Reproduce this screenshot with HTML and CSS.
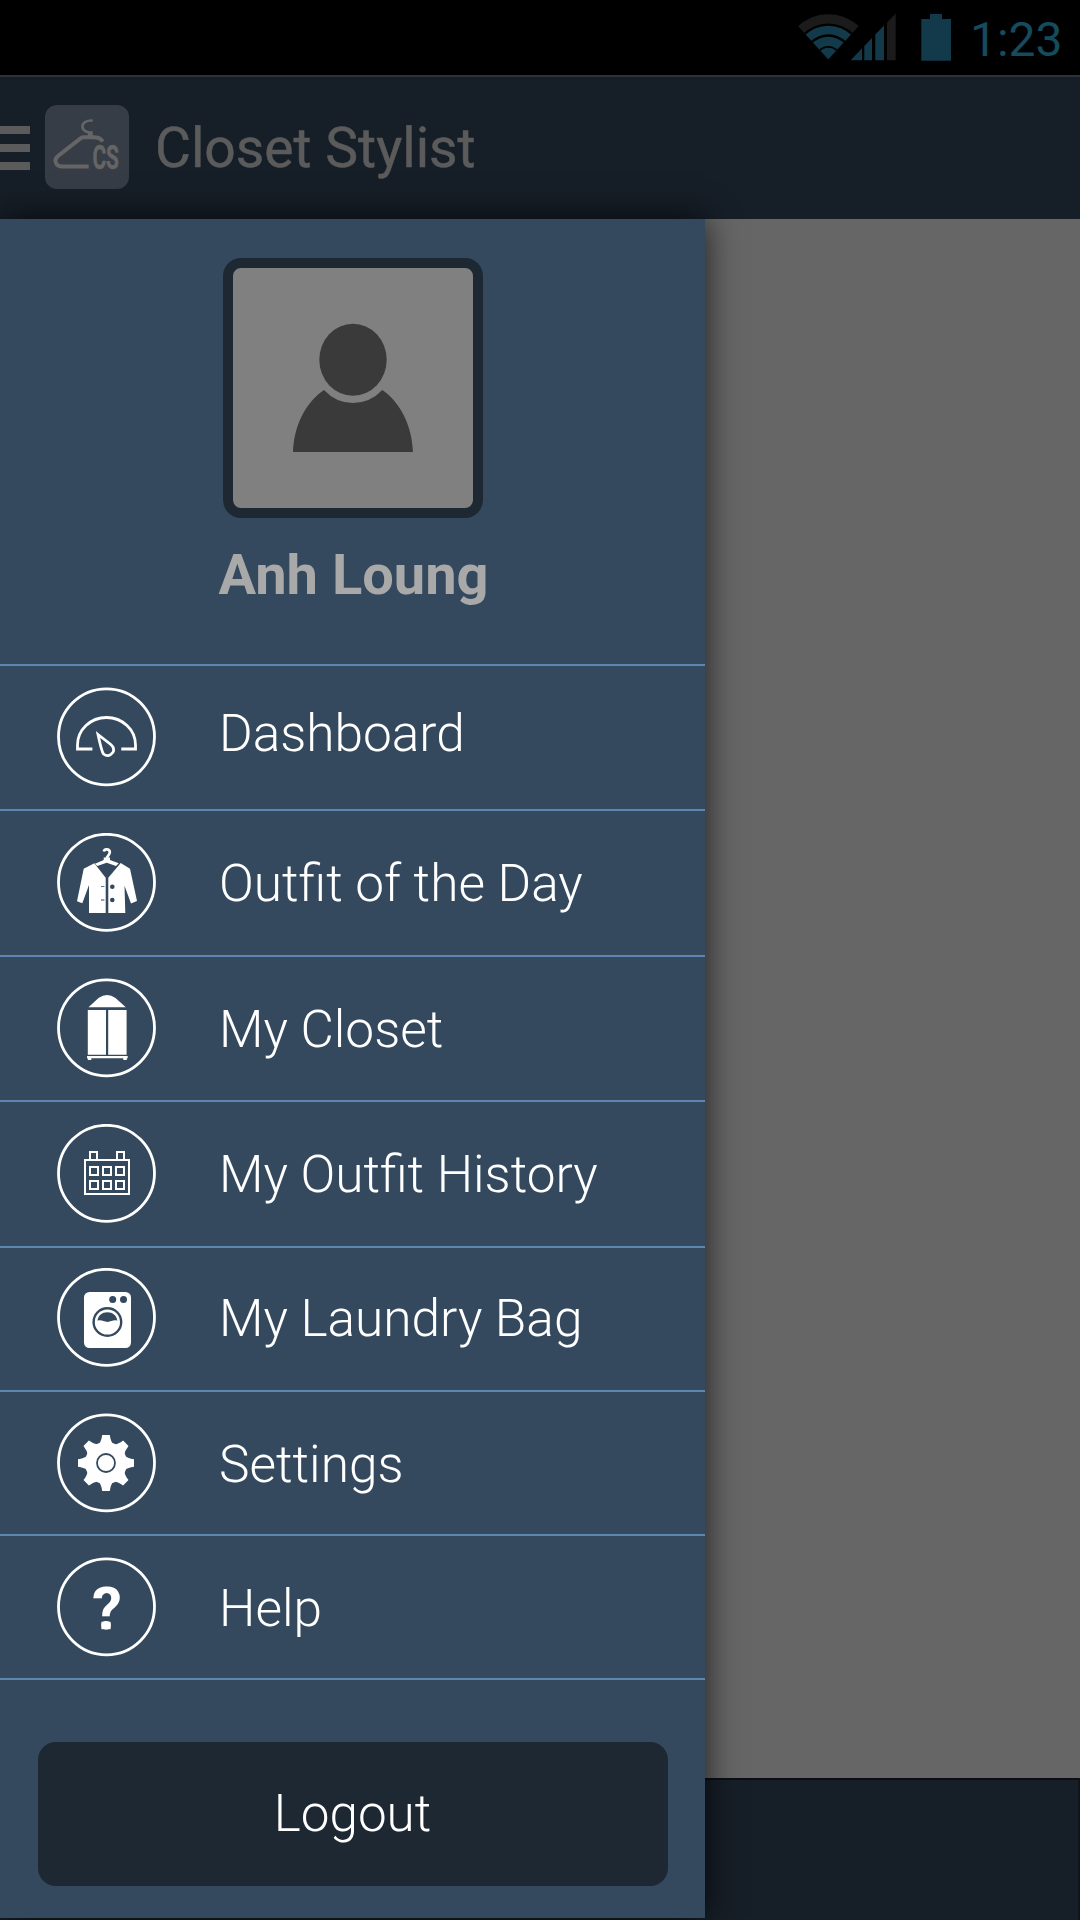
FILE: index.html
```html
<!DOCTYPE html>
<html lang="en">
<head>
<meta charset="utf-8">
<title>Closet Stylist</title>
<link rel="stylesheet" href="styles.css">
</head>
<body>
<div class="status-bar">
  <svg class="status-icons" viewBox="797 13 155 49" width="155" height="49">
    <clipPath id="wedge"><path d="M828.3 59.3 794.2 22V10H862.4V22Z"/></clipPath>
    <g clip-path="url(#wedge)">
      <circle cx="828.3" cy="59.3" r="45" fill="#1b1b1b"/>
      <circle cx="828.3" cy="59.3" r="35.8" fill="#000"/>
      <circle cx="828.3" cy="59.3" r="33.6" fill="#123a4a"/>
      <circle cx="828.3" cy="59.3" r="25" fill="#000"/>
      <circle cx="828.3" cy="59.3" r="22.6" fill="#123a4a"/>
      <circle cx="828.3" cy="59.3" r="13.3" fill="#000"/>
      <circle cx="828.3" cy="59.3" r="11.5" fill="#123a4a"/>
    </g>
    <path d="M850.7 60.3 862 48.3V60.3ZM864.3 46 872 38V60.3H864.3ZM875.3 34.5 884 25.5V60.3H875.3Z" fill="#123a4a"/>
    <path d="M887 22.5 895.7 13.5V60.3H887Z" fill="#1b1b1b"/>
    <path d="M930 14H942V19H951V60.7H921.3V19H930Z" fill="#123a4a"/>
  </svg>
  <span class="clock">1:23</span>
</div>

<header class="app-bar">
  <div class="burger"><i></i><i></i><i></i></div>
  <svg class="logo" viewBox="0 0 84 84" width="84" height="84">
    <rect width="84" height="84" rx="12" fill="#363d46"/>
    <g fill="none" stroke="#666565">
      <path d="M47.7 15.6C41 15.2 37.5 18 37.4 21.5S40.5 26.8 44.5 27.8" stroke-width="2.6"/>
      <path d="M45.3 26.2V31.5" stroke-width="4.8"/>
      <path d="M43.7 61.6H17.5C10.5 61.6 8.3 55 13 51L35.5 33.4Q37 32.3 39 32.3H48Q55.5 32.3 57.6 36.6" stroke-width="4"/>
    </g>
    <text class="logo-text" x="47.4" y="64.4" textLength="26.6" lengthAdjust="spacingAndGlyphs">CS</text>
  </svg>
  <h1 class="title">Closet Stylist</h1>
</header>

<div class="stage">
  <aside class="drawer">
    <section class="profile">
      <div class="avatar">
        <svg viewBox="10 10 240 240" width="240" height="240" fill="#3a3a3a">
          <ellipse cx="130" cy="101.7" rx="33.7" ry="36"/>
          <path d="M70 194C71 168 82 145 101 132Q113 145 130 145T159.3 132C178 145 189 168 190 194Z"/>
        </svg>
      </div>
      <div class="name">Anh Loung</div>
    </section>

    <nav class="menu">
      <a class="item item-dashboard">
        <svg class="icon" viewBox="0 0 100 100">
          <circle class="ring" cx="49.5" cy="49.8" r="48"/>
          <g fill="none" stroke="#fff" stroke-width="2.8">
            <path d="M35.4 62H20.5V58A29 27.5 0 0 1 78.5 58V62H64.3"/>
            <path d="M41 47.5 53.8 57.5Q58.3 61.5 55.8 65.5 51.5 71 46.5 67 44.6 64.5 41 47.5Z"/>
          </g>
        </svg>
        <span class="label">Dashboard</span>
      </a>
      <a class="item item-outfit">
        <svg class="icon" viewBox="0 0 100 100">
          <circle class="ring" cx="49.5" cy="49.3" r="48"/>
          <path d="M46.8 18.6C47.5 15.2 53 15.6 52.8 19.5 52.7 22 50 22.2 49.8 26" fill="none" stroke="#fff" stroke-width="2.7"/>
          <g fill="#fff">
            <path d="M38 30.7 46.7 27V24.5H53V27L61.7 30.3 59 32.9 49.7 29.8 40.3 32.9Z"/>
            <path d="M37.3 30.3 48.7 44.7V80H32V52L25.3 70.3 20 68.3 26.7 35.7Z"/>
            <path d="M63.7 29.9 51.3 44.7V80H68.3L67.5 52.7 74 70.5 80 67.9 73 35.7Z"/>
          </g>
          <g class="cutout">
            <circle cx="55.3" cy="53.7" r="2.3"/><circle cx="55.3" cy="67" r="2.3"/>
            <path d="M44 53.2h3.4v.9H44zM44 66.5h3.4v.9H44z"/>
          </g>
        </svg>
        <span class="label">Outfit of the Day</span>
      </a>
      <a class="item item-closet">
        <svg class="icon" viewBox="0 0 100 100">
          <circle class="ring" cx="49.5" cy="49.8" r="48"/>
          <path fill="#fff" d="M31.5 29.2 41.5 20Q50 14 58.5 20L68.8 29.2ZM30.8 32H49V76.8H30.8ZM51.2 32H69.6V76.8H51.2ZM30 78H70.7V80.3H69.8V82H66.3V80.3H34.3V82H30.8V80.3H30Z"/>
        </svg>
        <span class="label">My Closet</span>
      </a>
      <a class="item item-history">
        <svg class="icon" viewBox="0 0 100 100">
          <circle class="ring" cx="49.5" cy="49.3" r="48"/>
          <g fill="none" stroke="#fff" stroke-width="2">
            <path d="M28 36H72V70H28ZM33 36V28H40V36M60 36V28H67V36"/>
            <path d="M33 43h8v8h-8zM46 43h8v8h-8zM59 43h8v8h-8zM33 57h8v8h-8zM46 57h8v8h-8zM59 57h8v8h-8z"/>
          </g>
        </svg>
        <span class="label">My Outfit History</span>
      </a>
      <a class="item item-laundry">
        <svg class="icon" viewBox="0 0 100 100">
          <circle class="ring" cx="49.5" cy="49.3" r="48"/>
          <rect x="27" y="24" width="47" height="56" rx="5.5" fill="#fff"/>
          <g class="cutout">
            <circle cx="55.7" cy="31.4" r="3.5"/><circle cx="66.5" cy="31.4" r="3.5"/>
            <circle cx="50.4" cy="54" r="15"/>
            <circle cx="50.4" cy="54" r="12.6" fill="#fff"/>
            <path d="M40.4 52.8C41.5 47 45 44.2 50.4 44.2S59.3 47 60.4 52.8C56.5 51.3 54 54 50.4 53.9S44 51.3 40.4 52.8Z"/>
          </g>
        </svg>
        <span class="label">My Laundry Bag</span>
      </a>
      <a class="item item-settings">
        <svg class="icon" viewBox="0 0 100 100">
          <circle class="ring" cx="49.5" cy="49.8" r="48"/>
          <g transform="translate(49 50)" fill="#fff">
            <circle r="21"/>
            <g id="teeth">
              <path id="tooth" d="M-3.8-28H3.8Q4.6-22 7-19L0 0-7-19Q-4.6-22-3.8-28Z"/>
              <use href="#tooth" transform="rotate(45)"/>
              <use href="#tooth" transform="rotate(90)"/>
              <use href="#tooth" transform="rotate(135)"/>
            </g>
            <use href="#teeth" transform="rotate(180)"/>
            <circle class="hub" r="9"/>
          </g>
        </svg>
        <span class="label">Settings</span>
      </a>
      <a class="item item-help">
        <svg class="icon" viewBox="0 0 100 100">
          <circle class="ring" cx="49.5" cy="49.8" r="48"/>
          <text class="question" x="50" y="72" text-anchor="middle">?</text>
          <rect x="44.4" y="64.8" width="9.2" height="7.4" fill="#fff"/>
        </svg>
        <span class="label">Help</span>
      </a>
    </nav>

    <button class="logout">Logout</button>
  </aside>
  <main class="content"></main>
  <footer class="bottom-bar"></footer>
</div>
</body>
</html>
```
FILE: styles.css
```css
* { box-sizing: border-box; }

body {
  margin: 0;
  width: 1080px;
  height: 1920px;
  display: flex;
  flex-direction: column;
  overflow: hidden;
  background: #161e26;
  font-family: Roboto, "Liberation Sans", sans-serif;
}

.status-bar {
  height: 75px;
  display: flex;
  justify-content: flex-end;
  align-items: flex-start;
  gap: 18px;
  padding: 13px 17px 0 0;
  background: #000;
}

.clock {
  width: 93px;
  font-size: 48px;
  line-height: 54px;
  color: #164a5d;
  white-space: nowrap;
}

.app-bar {
  height: 144px;
  display: flex;
  align-items: flex-start;
  border-top: 2px solid #2e3138;
  background: #161e27;
}

.burger {
  width: 30px;
  margin: 49px 15px 0 0;
  display: flex;
  flex-direction: column;
  gap: 10px;
}

.burger i {
  height: 8px;
  background: #5b5b5b;
}

.logo {
  margin-top: 28px;
  overflow: visible;
}

.logo-text {
  font-size: 34px;
  font-weight: 700;
  fill: #666565;
  stroke: #666565;
  stroke-width: .5;
}

.title {
  margin: 38px 0 0 26px;
  font-size: 55.2px;
  font-weight: 400;
  line-height: 66px;
  color: #5b5b5b;
  white-space: nowrap;
  -webkit-text-stroke: .5px #5b5b5b;
}

.stage {
  height: 1701px;
  display: grid;
  grid-template-columns: 705px 1fr;
  grid-template-rows: 1559px 142px;
  background: #161e26;
}

.drawer {
  grid-row: 1 / 3;
  height: 1699px;
  z-index: 1;
  display: flex;
  flex-direction: column;
  background: #34495e;
  box-shadow: 0 0 32px rgba(0, 0, 0, .72);
}

.content {
  background: #666;
}

.bottom-bar {
  border-top: 2px solid #0b0f13;
  border-right: 2px solid #0f141a;
  background: #161e27;
}

.profile {
  height: 445px;
  display: flex;
  flex-direction: column;
  align-items: center;
  padding-top: 39px;
}

.avatar {
  width: 260px;
  height: 260px;
  border: 10px solid #1d2833;
  border-radius: 18px;
  background: #808080;
}

.name {
  margin: 24px 0 0 2px;
  font-size: 56px;
  font-weight: 700;
  line-height: 66px;
  color: #a9a9a9;
  white-space: nowrap;
}

.menu {
  border-top: 2px solid #5d86b0;
}

.item {
  height: 145px;
  display: flex;
  align-items: flex-start;
  gap: 62px;
  padding: 21px 0 0 57px;
  border-bottom: 2px solid #5d86b0;
  color: #fff;
}

.icon {
  width: 100px;
  height: 100px;
  flex: none;
}

.ring {
  fill: none;
  stroke: #fff;
  stroke-width: 2.8;
}

.cutout {
  fill: #34495e;
}

.hub {
  fill: none;
  stroke: #34495e;
  stroke-width: 1.8;
}

.question {
  font-size: 60px;
  font-weight: 700;
  fill: #fff;
}

.label {
  margin-top: 22px;
  font-size: 51.4px;
  font-weight: 300;
  line-height: 60px;
  white-space: nowrap;
}

.item-dashboard .label { margin-top: 17px; }

.item-outfit { height: 146px; padding-top: 22px; }
.item-outfit .label { margin-top: 21px; }

.item-history { height: 146px; padding-top: 22px; }
.item-history .label { margin-top: 21px; }

.item-laundry { height: 144px; padding-top: 20px; }
.item-laundry .label { margin-top: 21px; }

.item-settings,
.item-help { height: 144px; }

.logout {
  width: 630px;
  height: 144px;
  margin: 62px 0 0 37.5px;
  padding: 0;
  border: 0;
  border-radius: 18px;
  background: #1d2833;
  color: #fff;
  font: 300 51.2px/60px Roboto, "Liberation Sans", sans-serif;
}
```
